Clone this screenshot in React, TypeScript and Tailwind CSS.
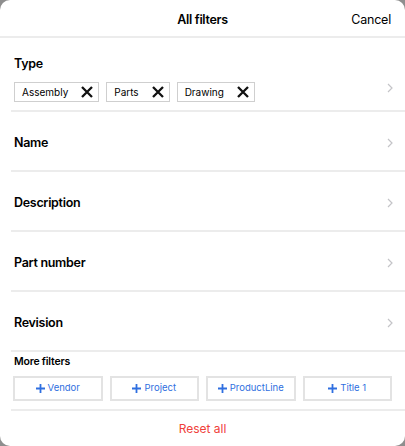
import React from 'react';

const rows = ['Name', 'Description', 'Part number', 'Revision'];
const types = ['Assembly', 'Parts', 'Drawing'];
const more = ['Vendor', 'Project', 'ProductLine', 'Title 1'];

const Chevron = () => (
  <svg width="6" height="10" viewBox="0 0 6 10" className="shrink-0">
    <path d="M1 1l4 4-4 4" fill="none" stroke="#c4c4c8" strokeWidth="1.2" />
  </svg>
);

const Close = () => (
  <svg width="12" height="12" viewBox="0 0 12 12">
    <path d="M1 1l10 10M11 1L1 11" stroke="#111" strokeWidth="2.3" />
  </svg>
);

const Plus = () => (
  <svg width="9" height="9" viewBox="0 0 9 9">
    <path d="M4.5 0v9M0 4.5h9" stroke="#2f6fe0" strokeWidth="1.8" />
  </svg>
);

export default function App() {
  return (
    <div className="w-[405px] h-[446px] bg-[#8e8e8e] font-['Inter',sans-serif] text-black">
      <div className="w-full h-full bg-white rounded-[10px] flex flex-col overflow-hidden">
        <header className="h-[38px] shrink-0 flex items-center relative border-b-2 border-[#ececec] pt-[4px]">
          <div className="flex-1 text-center text-[12.5px] font-semibold tracking-[-0.3px]">All filters</div>
          <button className="absolute right-[14px] text-[12.5px] tracking-[-0.2px]">Cancel</button>
        </header>

        <div className="ml-[11px]">
          <section className="h-[74px] border-b-2 border-[#ececec] pl-[3px] pr-[12px] pt-[19px] flex">
            <div className="flex-1">
              <div className="text-[12.5px] font-semibold leading-[14px] tracking-[-0.3px]">Type</div>
              <div className="flex gap-[7px] mt-[11px]">
                {types.map(t => (
                  <div key={t} className="h-[20px] border border-[#cfcfcf] flex items-center pl-[7px] pr-[5px] gap-[13px] text-[10px]">
                    <span>{t}</span>
                    <Close />
                  </div>
                ))}
              </div>
            </div>
            <div className="mt-[26px]"><Chevron /></div>
          </section>

          {rows.map(r => (
            <section key={r} className="h-[60px] border-b-2 border-[#ececec] pl-[3px] pr-[12px] pt-[4px] flex items-center justify-between">
              <span className="text-[12.5px] font-semibold tracking-[-0.3px]">{r}</span>
              <Chevron />
            </section>
          ))}
        </div>

        <div className="px-[14px] pt-[3px]">
          <div className="text-[10.5px] font-semibold leading-[14px] tracking-[-0.2px]">More filters</div>
          <div className="grid grid-cols-4 gap-[7px] mt-[7px] -mx-[1px]">
            {more.map(m => (
              <button key={m} className="h-[25px] border-2 border-[#e3e3e3] flex items-center justify-center gap-[3px] text-[9.5px] text-[#2f6fe0]">
                <Plus />
                <span>{m}</span>
              </button>
            ))}
          </div>
        </div>

        <div className="ml-[11px] mt-[8px] border-b-2 border-[#ececec]" />

        <div className="flex-1 flex items-center justify-center text-[12px] text-[#f0413b]">
          Reset all
        </div>
      </div>
    </div>
  );
}
